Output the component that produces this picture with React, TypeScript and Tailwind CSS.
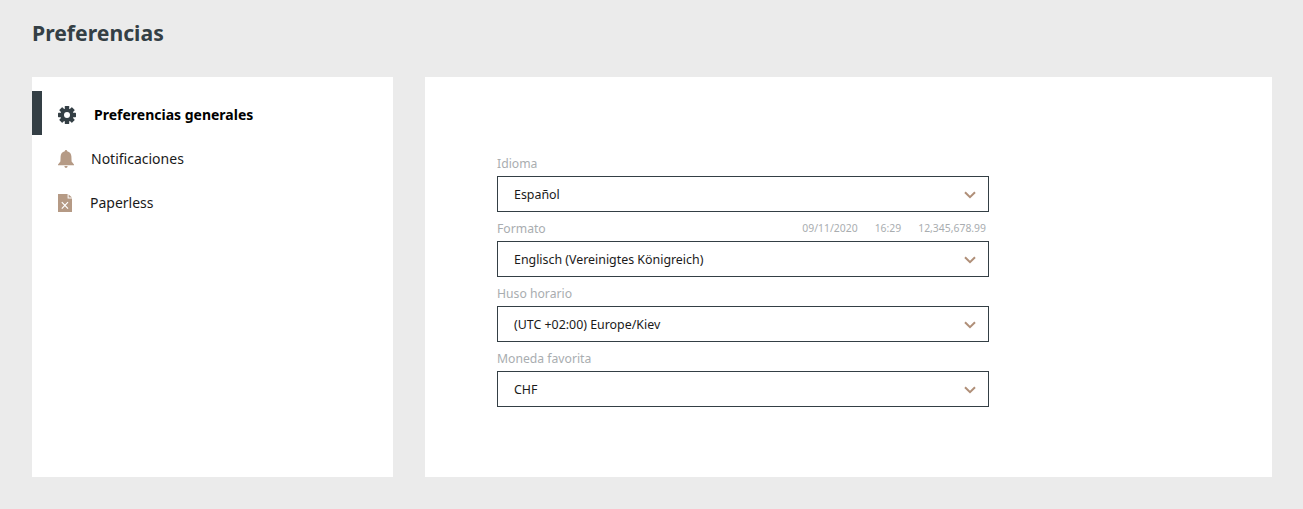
import React from 'react';

const sans = "font-['Noto_Sans',sans-serif]";

const Chevron = () => (
  <svg width="12" height="8" viewBox="0 0 12 8" fill="none" className="shrink-0">
    <path d="M1 1.2 L6 6.2 L11 1.2" stroke="#b08f78" strokeWidth="2" />
  </svg>
);

const GearIcon = () => (
  <svg width="18" height="18" viewBox="0 0 18 18" className="ml-[16px] mt-[2px] shrink-0">
    <g fill="#343f45">
      <rect x="6.8" y="0" width="4.4" height="18" rx="0.6" />
      <rect x="6.8" y="0" width="4.4" height="18" rx="0.6" transform="rotate(45 9 9)" />
      <rect x="6.8" y="0" width="4.4" height="18" rx="0.6" transform="rotate(90 9 9)" />
      <rect x="6.8" y="0" width="4.4" height="18" rx="0.6" transform="rotate(135 9 9)" />
      <circle cx="9" cy="9" r="6.6" />
    </g>
    <circle cx="9" cy="9" r="3" fill="#fff" />
  </svg>
);

const BellIcon = () => (
  <svg width="16" height="18" viewBox="0 0 16 18" className="mt-[2px] shrink-0">
    <path d="M8 0 C8.8 0 9.2 .6 9.2 1.3 C11.8 1.9 13.3 3.8 13.4 6.6 L13.6 11.4 L16 14.4 V15.2 H0 V14.4 L2.4 11.4 L2.6 6.6 C2.7 3.8 4.2 1.9 6.8 1.3 C6.8 .6 7.2 0 8 0 Z" fill="#b59a85" />
    <path d="M6.4 16 H9.6 C9.5 17.2 8.8 18 8 18 C7.2 18 6.5 17.2 6.4 16 Z" fill="#b59a85" />
  </svg>
);

const PaperlessIcon = () => (
  <svg width="14" height="18" viewBox="0 0 14 18" className="mt-[2px] shrink-0">
    <path d="M0 0 H9.6 V4.4 H14 V18 H0 Z" fill="#b59a85" />
    <path d="M10.6 .4 L14 3.6 H10.6 Z" fill="#b59a85" />
    <path d="M3.8 8.2 L10 14.6 M10 8.2 L3.8 14.6" stroke="#fff" strokeWidth="1.2" />
  </svg>
);

const SelectField = ({ label, value, extra }: { label: string; value: string; extra?: string[] }) => (
  <div>
    <div className="flex h-[29px] items-center justify-between pt-[5px] pr-[3px]">
      <span className="text-[12.2px] text-[#a9adb0]">{label}</span>
      {extra && (
        <div className="flex gap-[17px] text-[10.4px] text-[#a9adb0]">
          {extra.map(e => <span key={e}>{e}</span>)}
        </div>
      )}
    </div>
    <div className="flex h-[36px] items-center justify-between border border-[#343f45] bg-white pl-4 pr-3 pt-[2px]">
      <span className="text-[12.4px] text-[#1a1a1a]">{value}</span>
      <Chevron />
    </div>
  </div>
);

export default function App() {
  return (
    <div className={`min-h-[509px] bg-[#ebebeb] pl-8 pr-[31px] ${sans}`}>
      <div className="flex h-[77px] items-center pb-[12px]">
        <h1 className="text-[21.2px] font-bold text-[#343f45]">Preferencias</h1>
      </div>
      <div className="flex h-[400px] gap-8">
        <div className="w-[361px] bg-white pt-[14px]">
          <div className="flex h-[44px]">
            <div className="h-full w-[10px] bg-[#343f45]" />
            <div className="flex items-center pt-[2px]">
              <GearIcon />
              <span className="ml-[18px] text-[14px] font-bold text-black">Preferencias generales</span>
            </div>
          </div>
          <div className="flex h-[44px] items-center pl-[26px] pt-[2px]">
            <BellIcon />
            <span className="ml-[17px] text-[14px] text-[#1a1a1a]">Notificaciones</span>
          </div>
          <div className="flex h-[44px] items-center pl-[26px] pt-[2px]">
            <PaperlessIcon />
            <span className="ml-[18px] text-[14px] text-[#1a1a1a]">Paperless</span>
          </div>
        </div>
        <div className="flex-1 bg-white pl-[72px] pt-[70px]">
          <div className="w-[492px]">
            <SelectField label="Idioma" value="Español" />
            <SelectField label="Formato" value="Englisch (Vereinigtes Königreich)" extra={['09/11/2020', '16:29', '12,345,678.99']} />
            <SelectField label="Huso horario" value="(UTC +02:00) Europe/Kiev" />
            <SelectField label="Moneda favorita" value="CHF" />
          </div>
        </div>
      </div>
    </div>
  );
}
